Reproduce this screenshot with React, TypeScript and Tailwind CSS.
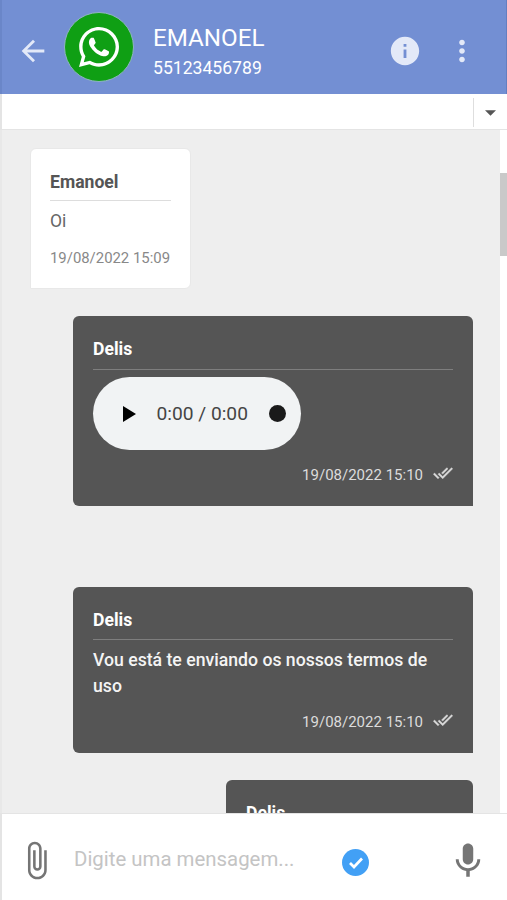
import React from 'react';
import { FaWhatsapp } from 'react-icons/fa';

interface Message {
  id: number;
  author: string;
  date: string;
  text?: string;
}

const received: Message = { id: 1, author: 'Emanoel', date: '19/08/2022 15:09', text: 'Oi' };
const audio: Message = { id: 2, author: 'Delis', date: '19/08/2022 15:10' };
const terms: Message = {
  id: 3,
  author: 'Delis',
  date: '19/08/2022 15:10',
  text: 'Vou está te enviando os nossos termos de uso',
};

const icons = {
  back: 'M20 11H7.83l5.59-5.59L12 4l-8 8 8 8 1.41-1.41L7.83 13H20v-2z',
  info: 'M12 2C6.48 2 2 6.48 2 12s4.48 10 10 10 10-4.48 10-10S17.52 2 12 2zm1 15h-2v-6h2v6zm0-8h-2V7h2v2z',
  more: 'M12 8c1.1 0 2-.9 2-2s-.9-2-2-2-2 .9-2 2 .9 2 2 2zm0 2c-1.1 0-2 .9-2 2s.9 2 2 2 2-.9 2-2-.9-2-2-2zm0 6c-1.1 0-2 .9-2 2s.9 2 2 2 2-.9 2-2-.9-2-2-2z',
  doneAll:
    'M18 7l-1.41-1.41-6.34 6.34 1.41 1.41L18 7zm4.24-1.41L11.66 16.17 7.48 12l-1.41 1.41L11.66 19l12-12-1.42-1.41zM.41 13.41L6 19l1.41-1.41L1.83 12 .41 13.41z',
  attach:
    'M16.5 6v11.5c0 2.21-1.79 4-4 4s-4-1.79-4-4V5c0-1.38 1.12-2.5 2.5-2.5s2.5 1.12 2.5 2.5v10.5c0 .55-.45 1-1 1s-1-.45-1-1V6H10v9.5c0 1.38 1.12 2.5 2.5 2.5s2.5-1.12 2.5-2.5V5c0-2.21-1.79-4-4-4S7 2.79 7 5v12.5c0 3.04 2.46 5.5 5.5 5.5s5.5-2.46 5.5-5.5V6h-1.5z',
  mic: 'M12 14c1.66 0 2.99-1.34 2.99-3L15 5c0-1.66-1.34-3-3-3S9 3.34 9 5v6c0 1.66 1.34 3 3 3zm5.3-3c0 3-2.54 5.1-5.3 5.1S6.7 14 6.7 11H5c0 3.41 2.72 6.23 6 6.72V21h2v-3.28c3.28-.48 6-3.3 6-6.72h-1.7z',
};

function Icon({ name, className }: { name: keyof typeof icons; className: string }) {
  return (
    <svg viewBox="0 0 24 24" fill="currentColor" className={`shrink-0 ${className}`}>
      <path d={icons[name]} />
    </svg>
  );
}

function Header() {
  return (
    <header className="flex h-[94px] shrink-0 items-start border-r border-l-2 border-r-[#647fc0] border-l-[#6a86c8] bg-[#738fd3] text-[#e3e9f8]">
      <button className="mt-[34px] ml-[14px]">
        <Icon name="back" className="size-[34px]" />
      </button>
      <div className="mt-[12px] ml-[14px] flex size-[70px] shrink-0 items-center justify-center rounded-full border border-[#8fb5c0] bg-[#0f9f14] text-white">
        <FaWhatsapp className="h-[46px] w-[40px]" />
      </div>
      <div className="mt-[22px] ml-[19px] flex-1 text-white">
        <h1 className="text-[24.2px] leading-[32px]">EMANOEL</h1>
        <p className="text-[17.6px] leading-[28px]">55123456789</p>
      </div>
      <button className="mt-[34px]">
        <Icon name="info" className="size-[34px]" />
      </button>
      <button className="mt-[34px] mr-[27px] ml-[23px]">
        <Icon name="more" className="size-[34px]" />
      </button>
    </header>
  );
}

function AudioPlayer() {
  return (
    <div className="mt-[7px] flex h-[73px] w-[208px] items-center rounded-full bg-[#f1f3f4] pr-[15px] pl-[29.5px]">
      <svg viewBox="0 0 13 16" className="h-[16px] w-[13px]">
        <path d="M0 0v16l13-8z" fill="#000" />
      </svg>
      <span className="mt-px ml-[21px] flex-1 text-[19.2px] whitespace-nowrap text-[#444]">0:00 / 0:00</span>
      <span className="size-[17px] shrink-0 rounded-full bg-[#1a1a1a]" />
    </div>
  );
}

function SentMessage({ message, children, className }: { message: Message; children: React.ReactNode; className: string }) {
  return (
    <div className={`flex w-[400px] flex-col self-end rounded-t-md rounded-bl-md bg-[#555] px-[20px] text-white ${className}`}>
      <div className="border-b border-[#7e7e7e] text-[17.6px] leading-[26px] font-bold">{message.author}</div>
      {children}
      <div className="mt-auto flex items-center justify-end gap-[10px] pb-[20px] text-[15px] leading-[22px] text-[#dcdcdc]">
        {message.date}
        <Icon name="doneAll" className="mb-[3px] size-[20px] stroke-current stroke-[0.5]" />
      </div>
    </div>
  );
}

export default function App() {
  return (
    <div className="flex h-[900px] w-[507px] flex-col overflow-hidden bg-white font-[Roboto,sans-serif]">
      <Header />

      <div className="flex h-[36px] shrink-0 justify-end border-b border-l-2 border-[#e4e4e4] bg-white">
        <div className="mt-[4px] flex h-[29px] w-[34px] items-center justify-center border-l border-[#dedede]">
          <svg viewBox="0 0 10 5" className="mt-[1px] h-[6px] w-[11px]">
            <path d="M0 0h10L5 5z" fill="#555" />
          </svg>
        </div>
      </div>

      <main className="flex min-h-0 flex-1 overflow-hidden">
        <div className="flex w-[500px] flex-col overflow-hidden border-l-2 border-[#e8e8e8] bg-[#eee] pt-[18px] pr-[27px] pl-[28px]">
          <div className="h-[141px] w-[161px] shrink-0 rounded-t-md rounded-br-md border border-[#e8e8e8] bg-white px-[19px] pt-[20px]">
            <div className="border-b border-[#ddd] pb-[5px] text-[17.6px] leading-[26px] font-bold text-[#555]">
              {received.author}
            </div>
            <p className="mt-[7px] text-[17.5px] leading-[26px] text-[#666]">{received.text}</p>
            <p className="mt-[13px] text-[14.9px] leading-[22px] whitespace-nowrap text-[#888]">{received.date}</p>
          </div>

          <SentMessage message={audio} className="mt-[27px] h-[190px] shrink-0 pt-[20px] *:first:pb-[7px]">
            <AudioPlayer />
          </SentMessage>

          <SentMessage message={terms} className="mt-[81px] h-[166px] shrink-0 pt-[20px] *:first:pb-[6px]">
            <p className="mt-[7px] text-[17.65px] leading-[26px] font-medium text-[#f4f4f4]">{terms.text}</p>
          </SentMessage>

          {/* next message, partly scrolled under the input bar */}
          <div className="mt-[27px] h-[166px] w-[247px] shrink-0 self-end rounded-t-md bg-[#555] px-[20px] pt-[20px] text-[17.6px] leading-[26px] font-bold text-white">
            Delis
          </div>
        </div>
        <div className="w-[7px] bg-white pt-[43px]">
          <div className="h-[83px] bg-[#c9c9c9]" />
        </div>
      </main>

      <footer className="flex h-[87px] shrink-0 items-start border-t border-l-2 border-[#e4e4e4] bg-white text-[#757575]">
        <Icon name="attach" className="mt-[26px] ml-[14px] size-[41px]" />
        <input
          className="mt-[28px] ml-[17px] h-[34px] w-[240px] bg-transparent text-[20.4px] outline-none placeholder:text-[#c4c4c4]"
          placeholder="Digite uma mensagem..."
        />
        <svg viewBox="0 0 27 27" className="mt-[35px] ml-[28px] size-[27px]">
          <circle cx="13.5" cy="13.5" r="13.5" fill="#42a0f5" />
          <path d="M8 14l4 4 8-8.5" fill="none" stroke="#fff" strokeWidth="2.7" />
        </svg>
        <Icon name="mic" className="mt-[26px] mr-[18px] ml-auto size-[42px]" />
      </footer>
    </div>
  );
}
